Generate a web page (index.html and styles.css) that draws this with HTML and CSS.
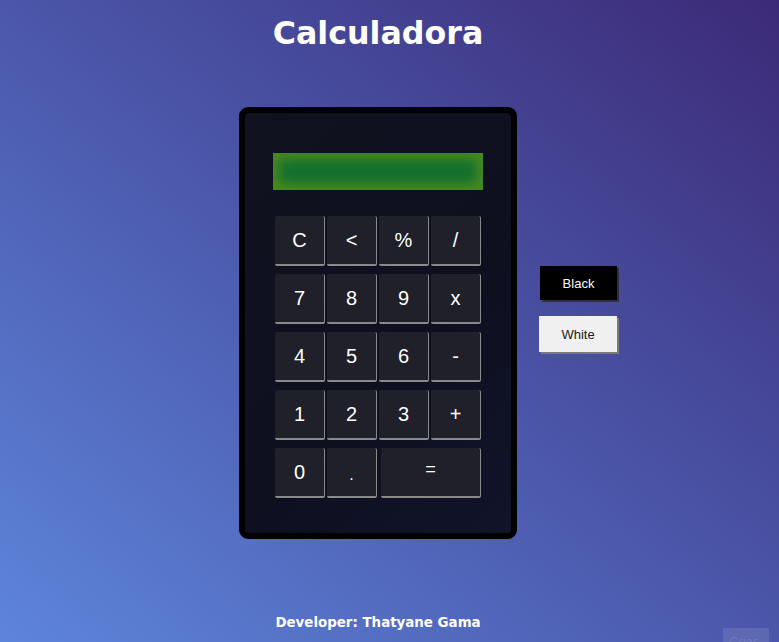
FILE: index.html
```html
<!DOCTYPE html>
<html lang="pt-BR">
<head>
<meta charset="utf-8">
<title>Calculadora</title>
<link rel="stylesheet" href="styles.css">
</head>
<body>
<div class="page">
  <h1 class="title">Calculadora</h1>
  <div class="stage">
    <div class="spacer"></div>
    <div class="calc">
      <div class="calc-inner">
        <div class="display"></div>
        <div class="keys">
          <button class="key">C</button>
          <button class="key">&lt;</button>
          <button class="key">%</button>
          <button class="key">/</button>
          <button class="key">7</button>
          <button class="key">8</button>
          <button class="key">9</button>
          <button class="key">x</button>
          <button class="key">4</button>
          <button class="key">5</button>
          <button class="key">6</button>
          <button class="key">-</button>
          <button class="key">1</button>
          <button class="key">2</button>
          <button class="key">3</button>
          <button class="key">+</button>
          <button class="key">0</button>
          <button class="key key-dot">.</button>
          <button class="key key-eq">=</button>
        </div>
      </div>
    </div>
    <div class="themes">
      <button class="theme theme-black">Black</button>
      <button class="theme theme-white">White</button>
    </div>
  </div>
  <footer class="footer">Developer: Thatyane Gama</footer>
</div>
<div class="ghost">Criar</div>
</body>
</html>
```
FILE: styles.css
```css
* { box-sizing: border-box; }
html, body { margin: 0; padding: 0; }
body {
  width: 779px;
  height: 642px;
  overflow: hidden;
  background: linear-gradient(to top right, #5d85db 0%, #4b57aa 50%, #3c2a77 100%);
  font-family: "Liberation Sans", Arial, sans-serif;
  position: relative;
}
.page {
  width: 756px;
  display: flex;
  flex-direction: column;
}
.title {
  margin: 15px 0 0;
  text-align: center;
  font-family: "DejaVu Sans", Verdana, sans-serif;
  font-weight: bold;
  font-size: 31.7px;
  color: #ffffff;
  line-height: 37px;
}
.stage {
  margin-top: 55px;
  display: grid;
  grid-template-columns: 1fr auto 1fr;
  align-items: start;
}
.calc {
  width: 278px;
  height: 432px;
  border: 6px solid #000;
  border-radius: 9px;
  background: #000;
}
.calc-inner {
  height: 100%;
  border-radius: 4px;
  background: linear-gradient(135deg, #10121f 0%, #0e1020 60%, #11142a 100%);
  padding: 40px 0 0 28px;
}
.display {
  width: 210px;
  height: 37px;
  background: #13702f;
  box-shadow: inset 0 0 12px 6px #4c8a1f;
}
.keys {
  margin: 26px 0 0 2px;
  display: grid;
  grid-template-columns: repeat(4, 50px);
  grid-auto-rows: 50px;
  column-gap: 2px;
  row-gap: 8px;
}
.key {
  margin: 0;
  padding: 0;
  background: #1f2029;
  color: #ffffff;
  font-family: "Liberation Sans", Arial, sans-serif;
  font-size: 20px;
  border: none;
  border-right: 1px solid #8a8a8a;
  border-bottom: 2px solid #8a8a8a;
  border-radius: 2px;
}
.key-dot { font-size: 16px; padding-top: 6px; }
.key-eq {
  grid-column: span 2;
  margin-left: 2px;
  font-size: 18px;
  padding-bottom: 6px;
}
.themes {
  margin: 159px 0 0 22px;
  display: flex;
  flex-direction: column;
  align-items: flex-start;
  gap: 16px;
}
.theme {
  margin: 0;
  height: 34px;
  border: none;
  font-family: "Liberation Sans", Arial, sans-serif;
  font-size: 13px;
  cursor: pointer;
}
.theme-black {
  width: 77px;
  margin-left: 1px;
  background: #000;
  color: #fff;
  box-shadow: 2px 2px 0 #2f2f3f;
}
.theme-white {
  width: 78px;
  height: 36px;
  background: #f0f0f0;
  color: #222;
  box-shadow: 2px 2px 0 #7a7a7a;
}
.footer {
  margin-top: 75px;
  text-align: center;
  font-family: "DejaVu Sans", Verdana, sans-serif;
  font-weight: bold;
  font-size: 13.4px;
  line-height: 17px;
  color: #ffffff;
}
.ghost {
  position: absolute;
  left: 723px;
  top: 628px;
  width: 46px;
  height: 24px;
  background: rgba(255, 255, 255, 0.1);
  color: rgba(255, 255, 255, 0.12);
  font-size: 13px;
  padding: 6px 0 0 6px;
}
```
